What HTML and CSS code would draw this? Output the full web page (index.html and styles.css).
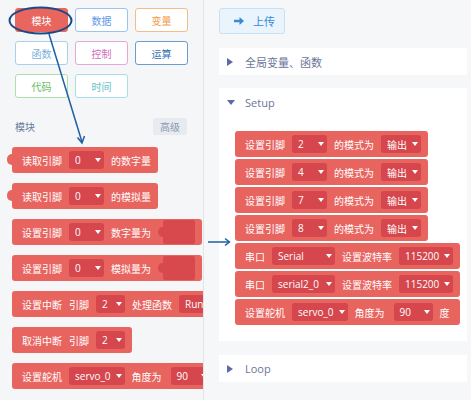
FILE: index.html
```html
<!DOCTYPE html>
<html lang="zh">
<head>
<meta charset="utf-8">
<title>Blocks</title>
<link rel="stylesheet" href="styles.css">
</head>
<body>
<div class="app">
  <aside class="palette">
    <div class="cats">
      <div class="cat active">模块</div>
      <div class="cat c-data">数据</div>
      <div class="cat c-var">变量</div>
      <div class="cat c-func">函数</div>
      <div class="cat c-ctrl">控制</div>
      <div class="cat c-math">运算</div>
      <div class="cat c-code">代码</div>
      <div class="cat c-time">时间</div>
    </div>
    <div class="pal-head"><span>模块</span><span class="adv">高级</span></div>
    <div class="pal-blocks">
      <div class="block tab"><span>读取引脚</span><span class="dd">0<i class="caret"></i></span><span>的数字量</span></div>
      <div class="block tab"><span>读取引脚</span><span class="dd">0<i class="caret"></i></span><span>的模拟量</span></div>
      <div class="block"><span>设置引脚</span><span class="dd">0<i class="caret"></i></span><span>数字量为</span><span class="slot"></span></div>
      <div class="block"><span>设置引脚</span><span class="dd">0<i class="caret"></i></span><span>模拟量为</span><span class="slot"></span></div>
      <div class="block"><span>设置中断</span><span>引脚</span><span class="dd narrow">2<i class="caret"></i></span><span>处理函数</span><span class="dd">Run<i class="caret"></i></span></div>
      <div class="block"><span>取消中断</span><span>引脚</span><span class="dd narrow">2<i class="caret"></i></span></div>
      <div class="block"><span>设置舵机</span><span class="dd">servo_0<i class="caret"></i></span><span>角度为</span><span class="dd angle">90<i class="caret"></i></span></div>
    </div>
  </aside>
  <main class="work">
    <div class="toolbar">
      <div class="upload">
        <svg class="up-ico" width="10" height="8" viewBox="0 0 10 8"><path d="M0 2.8h5.5V0L10 4 5.5 8V5.2H0z" fill="#3a8ad6"/></svg>
        <span>上传</span>
      </div>
    </div>
    <section class="sec first">
      <div class="sec-head"><i class="tri-r"></i><span>全局变量、函数</span></div>
    </section>
    <section class="sec setup">
      <div class="sec-head tall"><i class="tri-d"></i><span>Setup</span></div>
      <div class="stack">
        <div class="block"><span>设置引脚</span><span class="dd">2<i class="caret"></i></span><span>的模式为</span><span class="dd">输出<i class="caret"></i></span></div>
        <div class="block"><span>设置引脚</span><span class="dd">4<i class="caret"></i></span><span>的模式为</span><span class="dd">输出<i class="caret"></i></span></div>
        <div class="block"><span>设置引脚</span><span class="dd">7<i class="caret"></i></span><span>的模式为</span><span class="dd">输出<i class="caret"></i></span></div>
        <div class="block"><span>设置引脚</span><span class="dd">8<i class="caret"></i></span><span>的模式为</span><span class="dd">输出<i class="caret"></i></span></div>
        <div class="block"><span>串口</span><span class="dd wide">Serial<i class="caret"></i></span><span>设置波特率</span><span class="dd">115200<i class="caret"></i></span></div>
        <div class="block"><span>串口</span><span class="dd wide">serial2_0<i class="caret"></i></span><span>设置波特率</span><span class="dd">115200<i class="caret"></i></span></div>
        <div class="block servo"><span>设置舵机</span><span class="dd">servo_0<i class="caret"></i></span><span>角度为</span><span class="dd angle">90<i class="caret"></i></span><span>度</span></div>
      </div>
    </section>
    <section class="sec loop">
      <div class="sec-head"><i class="tri-r"></i><span>Loop</span></div>
    </section>
  </main>
  <svg class="annot" width="471" height="400" viewBox="0 0 471 400">
    <ellipse cx="40.5" cy="20.5" rx="31" ry="13" fill="none" stroke="#1d4a86" stroke-width="2"/>
    <line x1="49" y1="34" x2="82" y2="142" stroke="#1f5fa3" stroke-width="1.5"/>
    <polyline points="77.5,137.5 82,143 84.5,136" fill="none" stroke="#1f5fa3" stroke-width="1.5"/>
    <line x1="208" y1="242" x2="229" y2="242" stroke="#1f5fa3" stroke-width="1.5"/>
    <polyline points="225,238.5 229.5,242 225,245.5" fill="none" stroke="#1f5fa3" stroke-width="1.5"/>
  </svg>
</div>
</body>
</html>
```

FILE: styles.css
```css
html, body {
  margin: 0;
  padding: 0;
}
body {
  width: 471px;
  height: 400px;
  overflow: hidden;
  font-family: "Open Sans", "Noto Sans CJK SC", sans-serif;
  background: #f4f6f7;
}
.app {
  position: relative;
  display: flex;
  width: 471px;
  height: 400px;
}

/* palette */
.palette {
  width: 204px;
  flex: none;
  box-sizing: border-box;
  background: #f4f6f7;
  border-right: 1px solid #e3e6e9;
  overflow: hidden;
  padding-top: 8px;
}
.cats {
  display: grid;
  grid-template-columns: repeat(3, 53px);
  grid-auto-rows: 24px;
  column-gap: 7px;
  row-gap: 9px;
  padding-left: 15px;
}
.cat {
  box-sizing: border-box;
  border: 1px solid;
  border-radius: 3px;
  background: #fff;
  font-size: 10px;
  display: flex;
  align-items: center;
  justify-content: center;
}
.cat.active { background: #e9665f; border-color: #e9665f; color: #fff; }
.c-data { border-color: #9cc3ee; color: #5b9ae8; }
.c-var  { border-color: #f4bd86; color: #f09d4c; }
.c-func { border-color: #a9d0ec; color: #7ab3de; }
.c-ctrl { border-color: #e6a7da; color: #d46cc0; }
.c-math { border-color: #6c9bcd; color: #3a73b3; }
.c-code { border-color: #aedfa9; color: #69bd67; }
.c-time { border-color: #a6e0e3; color: #68c3ca; }

.pal-head {
  margin-top: 20px;
  height: 17px;
  display: flex;
  justify-content: space-between;
  align-items: center;
  padding: 0 16px 0 15px;
  font-size: 10px;
  color: #6a7a9c;
}
.adv {
  width: 34px;
  height: 17px;
  border-radius: 3px;
  background: #e7ebf0;
  color: #8a98b4;
  display: flex;
  align-items: center;
  justify-content: center;
}
.pal-blocks {
  margin-top: 12px;
  padding-left: 12px;
  display: flex;
  flex-direction: column;
  align-items: flex-start;
  gap: 10px;
}

/* blocks */
.block {
  position: relative;
  flex: none;
  width: max-content;
  display: flex;
  align-items: center;
  gap: 7px;
  height: 26px;
  box-sizing: border-box;
  padding: 0 7px 0 10px;
  background: #e8645f;
  border-radius: 3px;
  color: #fff;
  font-size: 10px;
  white-space: nowrap;
}
.block.servo { padding-right: 10px; }
.block.tab::before {
  content: "";
  position: absolute;
  left: -5px;
  top: 7px;
  width: 8px;
  height: 11px;
  border-radius: 5px 0 0 5px;
  background: #e8645f;
}
.dd {
  display: flex;
  align-items: center;
  justify-content: space-between;
  gap: 5px;
  height: 18px;
  min-width: 35px;
  box-sizing: border-box;
  padding: 0 3px 0 6px;
  background: #d5464d;
  border-radius: 3px;
}
.dd.narrow { min-width: 29px; }
.dd.wide { width: 63px; }
.dd.angle { min-width: 39px; margin-left: 2px; }
.caret {
  width: 0;
  height: 0;
  border-left: 3.5px solid transparent;
  border-right: 3.5px solid transparent;
  border-top: 4px solid #fff;
}
.slot {
  position: relative;
  width: 32px;
  height: 24px;
  margin-left: 5px;
  background: #d8494d;
  border-radius: 2px;
}
.slot::before {
  content: "";
  position: absolute;
  left: -5px;
  top: 7px;
  width: 9px;
  height: 10px;
  border-radius: 50%;
  background: #d8494d;
}

/* workspace */
.work {
  flex: 1;
  box-sizing: border-box;
  padding: 8px 4px 0 15px;
  display: flex;
  flex-direction: column;
  background: #f5f7f8;
}
.toolbar { display: flex; }
.upload {
  width: 66px;
  height: 26px;
  box-sizing: border-box;
  border: 1px solid #c9e1f4;
  background: #e9f4fc;
  border-radius: 3px;
  display: flex;
  align-items: center;
  gap: 9px;
  padding-left: 14px;
  color: #3a8ad6;
  font-size: 11px;
}
.sec { background: #fff; margin-top: 14px; }
.sec.setup { margin-top: 13px; }
.sec-head {
  height: 27px;
  display: flex;
  align-items: center;
  padding-left: 8px;
  font-size: 11px;
  color: #6c7698;
}
.sec-head.tall { height: 28px; }
.tri-r {
  width: 0;
  height: 0;
  border-top: 4.5px solid transparent;
  border-bottom: 4.5px solid transparent;
  border-left: 6px solid #5d6aa6;
  margin-right: 12px;
}
.tri-d {
  width: 0;
  height: 0;
  border-left: 4px solid transparent;
  border-right: 4px solid transparent;
  border-top: 5px solid #5d6aa6;
  margin-right: 10px;
}
.stack {
  padding: 15px 0 16px 16px;
  display: flex;
  flex-direction: column;
  align-items: flex-start;
  gap: 2px;
}

/* annotation overlay */
.annot {
  position: absolute;
  left: 0;
  top: 0;
  pointer-events: none;
}
```
